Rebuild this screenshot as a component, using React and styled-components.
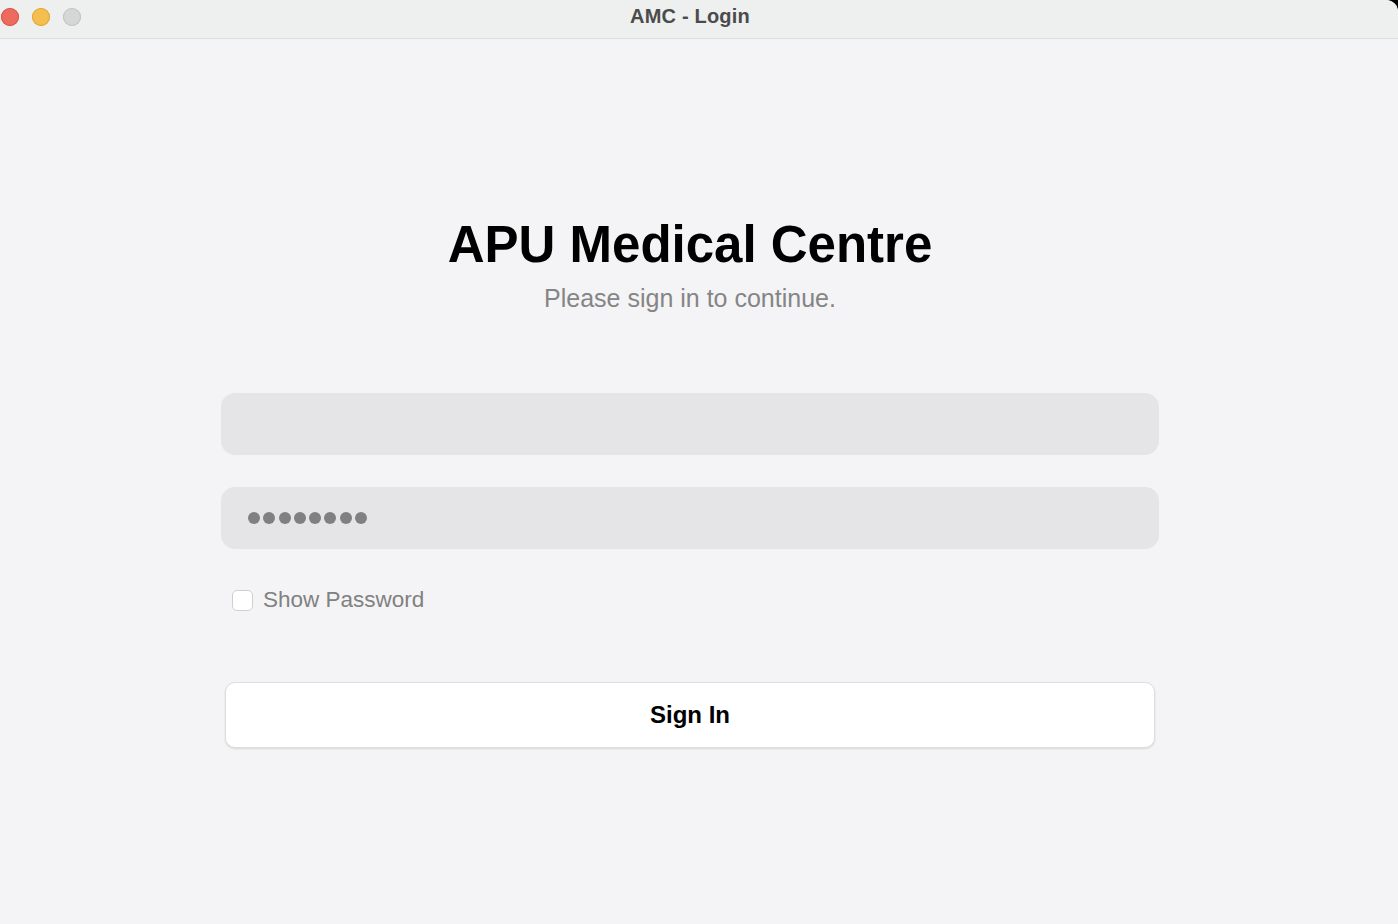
import React from "react";
import styled, { createGlobalStyle } from "styled-components";

const GlobalStyle = createGlobalStyle`
  html, body {
    margin: 0;
    padding: 0;
    background: #000;
  }
  body {
    font-family: "Liberation Sans", Arial, sans-serif;
  }
`;

const Window = styled.div`
  position: relative;
  width: 1398px;
  height: 924px;
  background: #f4f4f6;
  display: flex;
  flex-direction: column;
  overflow: hidden;
  border-top-right-radius: 12px;
`;

const TitleBar = styled.div`
  height: 38px;
  flex-shrink: 0;
  background: #eeefef;
  border-bottom: 1px solid #dedede;
  display: flex;
  align-items: center;
  position: relative;
`;

const Lights = styled.div`
  display: flex;
  gap: 13px;
  margin-left: 1px;
  margin-top: -4px;
`;

const Light = styled.span`
  width: 18px;
  height: 18px;
  border-radius: 50%;
  background: ${(p) => p.$color};
  box-shadow: inset 0 0 0 1px ${(p) => p.$ring};
`;

const Title = styled.div`
  position: absolute;
  left: 0;
  right: 18px;
  top: 5px;
  text-align: center;
  font-size: 20px;
  font-weight: 700;
  color: #4b4b4b;
  letter-spacing: 0.2px;
`;

const Content = styled.main`
  flex: 1;
  display: flex;
  flex-direction: column;
  align-items: center;
  padding: 176px 18px 0 0;
`;

const Heading = styled.h1`
  margin: 0;
  font-size: 51px;
  line-height: 60px;
  font-weight: 700;
  color: #000;
`;

const Subtitle = styled.p`
  margin: 8px 0 0;
  font-size: 25px;
  line-height: 30px;
  color: #858585;
`;

const Form = styled.form`
  width: 938px;
  margin-top: 80px;
  display: flex;
  flex-direction: column;
`;

const Field = styled.div`
  height: 62px;
  border-radius: 14px;
  background: #e5e5e8;
  display: flex;
  align-items: center;
  padding: 0 27px;
  margin-bottom: ${(p) => p.$gap || 0}px;
`;

const Dots = styled.div`
  display: flex;
  gap: 3.3px;
`;

const Dot = styled.span`
  width: 12px;
  height: 12px;
  border-radius: 50%;
  background: #808080;
`;

const CheckRow = styled.label`
  display: flex;
  align-items: center;
  gap: 10px;
  margin: 38px 0 0 11px;
  font-size: 22.5px;
  color: #818181;
`;

const Box = styled.span`
  width: 19px;
  height: 19px;
  border-radius: 5px;
  background: #fff;
  border: 1px solid #cfcfcf;
`;

const Button = styled.button`
  margin: 69px 4px 0 4px;
  height: 66px;
  border-radius: 10px;
  background: #fff;
  border: 1px solid #dedede;
  box-shadow: 0 1px 2px rgba(0, 0, 0, 0.12);
  font-family: "Liberation Sans", Arial, sans-serif;
  font-size: 24px;
  font-weight: 700;
  color: #000;
`;

export default function App() {
  return (
    <>
      <GlobalStyle />
      <Window>
        <TitleBar>
          <Lights>
            <Light $color="#ed6a5e" $ring="#d9564b" />
            <Light $color="#f5bf4f" $ring="#dea63c" />
            <Light $color="#d6d6d6" $ring="#c2c2c2" />
          </Lights>
          <Title>AMC - Login</Title>
        </TitleBar>
        <Content>
          <Heading>APU Medical Centre</Heading>
          <Subtitle>Please sign in to continue.</Subtitle>
          <Form onSubmit={(e) => e.preventDefault()}>
            <Field $gap={32} />
            <Field>
              <Dots>
                {Array.from({ length: 8 }).map((_, i) => (
                  <Dot key={i} />
                ))}
              </Dots>
            </Field>
            <CheckRow>
              <Box />
              Show Password
            </CheckRow>
            <Button type="submit">Sign In</Button>
          </Form>
        </Content>
      </Window>
    </>
  );
}
